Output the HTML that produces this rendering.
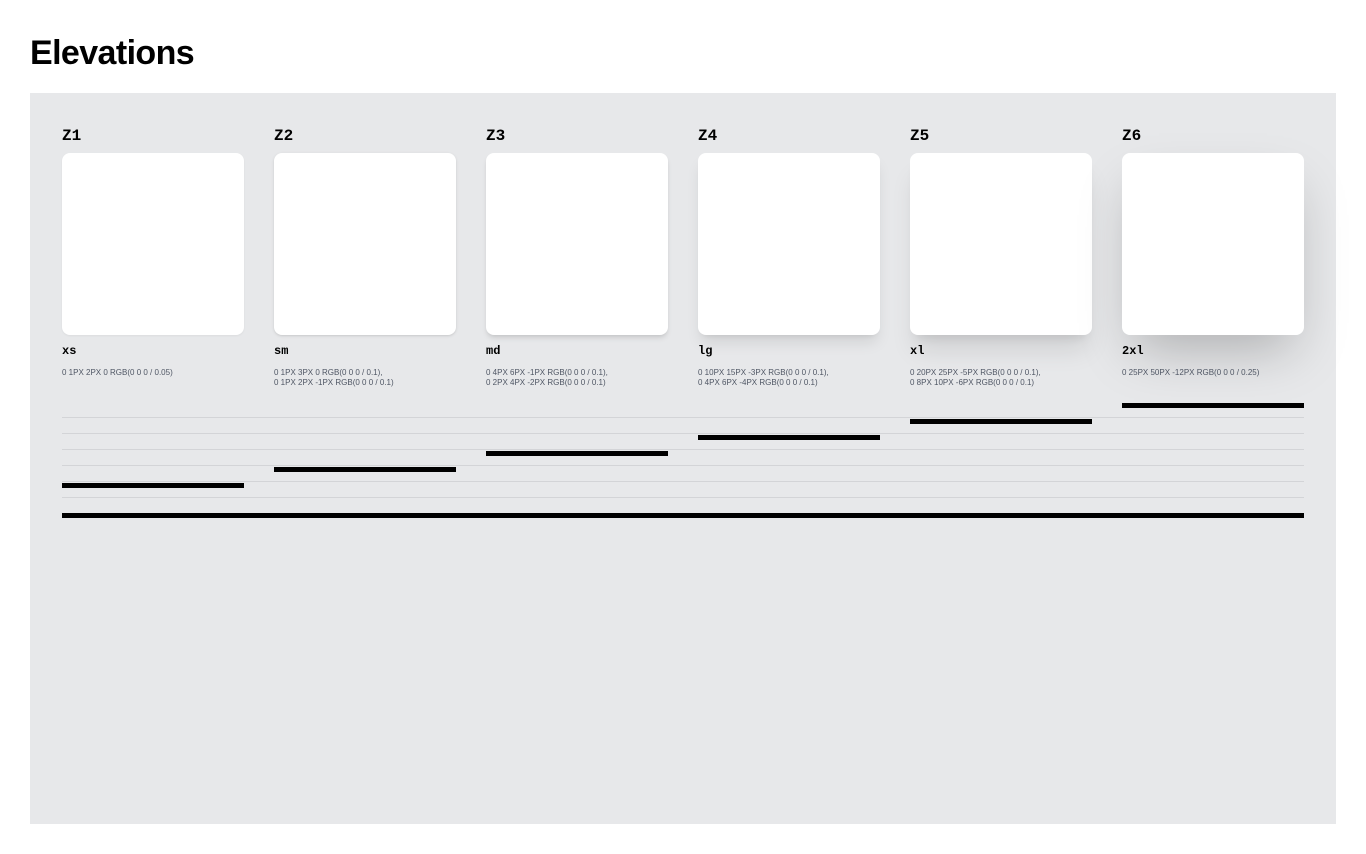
<!DOCTYPE html>
<html><head><style>
*{margin:0;padding:0;box-sizing:border-box}
body{width:1366px;height:854px;background:#fff;font-family:"Liberation Sans",sans-serif;position:relative;overflow:hidden}
h1{position:absolute;left:30px;top:31px;font-size:34px;font-weight:700;line-height:44px;color:#000;letter-spacing:-0.6px}
.panel{position:absolute;left:30px;top:93px;width:1306px;height:731px;background:#e7e8ea}
.col{position:absolute;top:0;width:182px}
.z{position:absolute;top:34px;font-family:"Liberation Mono",monospace;font-weight:700;font-size:16px;color:#000}
.card{position:absolute;top:60px;left:0;width:182px;height:182px;background:#fff;border-radius:8px}
.n{position:absolute;top:251px;font-family:"Liberation Mono",monospace;font-weight:700;font-size:12px;color:#000}
.d{position:absolute;top:275px;font-size:8px;line-height:10px;color:#4f5664;white-space:nowrap;text-transform:uppercase}
.gl{position:absolute;left:32px;width:1242px;height:1px;background:#d3d4d7}
.bar{position:absolute;height:5px;background:#000}
</style></head><body>
<h1>Elevations</h1>
<div class="panel">
<div class="col" style="left:32px"><div class="z">Z1</div><div class="card" style="box-shadow:0 1px 2px 0 rgb(0 0 0/.05)"></div><div class="n">xs</div><div class="d">0 1px 2px 0 rgb(0 0 0 / 0.05)</div></div>
<div class="col" style="left:244px"><div class="z">Z2</div><div class="card" style="box-shadow:0 1px 3px 0 rgb(0 0 0/.1),0 1px 2px -1px rgb(0 0 0/.1)"></div><div class="n">sm</div><div class="d">0 1px 3px 0 rgb(0 0 0 / 0.1),<br>0 1px 2px -1px rgb(0 0 0 / 0.1)</div></div>
<div class="col" style="left:456px"><div class="z">Z3</div><div class="card" style="box-shadow:0 4px 6px -1px rgb(0 0 0/.1),0 2px 4px -2px rgb(0 0 0/.1)"></div><div class="n">md</div><div class="d">0 4px 6px -1px rgb(0 0 0 / 0.1),<br>0 2px 4px -2px rgb(0 0 0 / 0.1)</div></div>
<div class="col" style="left:668px"><div class="z">Z4</div><div class="card" style="box-shadow:0 10px 15px -3px rgb(0 0 0/.1),0 4px 6px -4px rgb(0 0 0/.1)"></div><div class="n">lg</div><div class="d">0 10px 15px -3px rgb(0 0 0 / 0.1),<br>0 4px 6px -4px rgb(0 0 0 / 0.1)</div></div>
<div class="col" style="left:880px"><div class="z">Z5</div><div class="card" style="box-shadow:0 20px 25px -5px rgb(0 0 0/.1),0 8px 10px -6px rgb(0 0 0/.1)"></div><div class="n">xl</div><div class="d">0 20px 25px -5px rgb(0 0 0 / 0.1),<br>0 8px 10px -6px rgb(0 0 0 / 0.1)</div></div>
<div class="col" style="left:1092px"><div class="z">Z6</div><div class="card" style="box-shadow:0 25px 50px -12px rgb(0 0 0/.25)"></div><div class="n">2xl</div><div class="d">0 25px 50px -12px rgb(0 0 0 / 0.25)</div></div>
<div class="gl" style="top:324px"></div><div class="gl" style="top:340px"></div><div class="gl" style="top:356px"></div><div class="gl" style="top:372px"></div><div class="gl" style="top:388px"></div><div class="gl" style="top:404px"></div>
<div class="bar" style="left:32px;width:182px;top:390px"></div>
<div class="bar" style="left:244px;width:182px;top:374px"></div>
<div class="bar" style="left:456px;width:182px;top:358px"></div>
<div class="bar" style="left:668px;width:182px;top:342px"></div>
<div class="bar" style="left:880px;width:182px;top:326px"></div>
<div class="bar" style="left:1092px;width:182px;top:310px"></div>
<div class="bar" style="left:32px;width:1242px;top:420px"></div>
</div>
</body></html>
